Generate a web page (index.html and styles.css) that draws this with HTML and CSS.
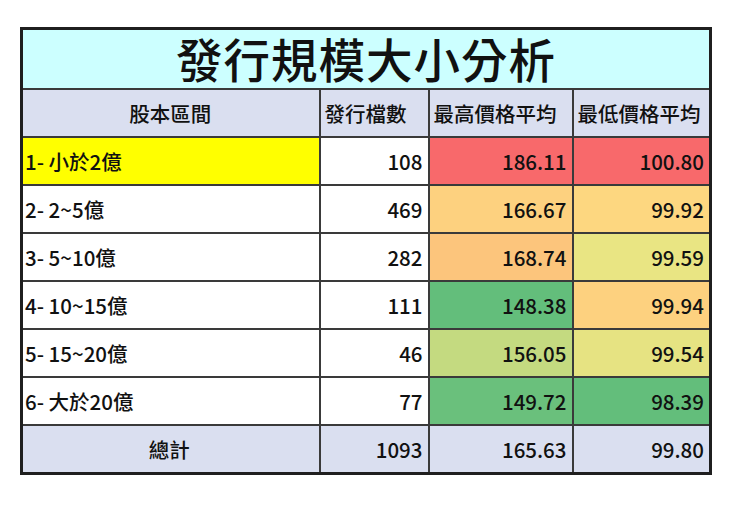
FILE: index.html
```html
<!DOCTYPE html>
<html lang="zh-Hant">
<head>
<meta charset="utf-8">
<link rel="stylesheet" href="styles.css">
</head>
<body>
<table class="sheet">
  <colgroup>
    <col class="c1"><col class="c2"><col class="c3"><col class="c4">
  </colgroup>
  <tr class="title-row"><td colspan="4" class="title">發行規模大小分析</td></tr>
  <tr class="head">
    <td class="center">股本區間</td>
    <td>發行檔數</td>
    <td>最高價格平均</td>
    <td>最低價格平均</td>
  </tr>
  <tr>
    <td class="label yellow">1- 小於2億</td>
    <td class="num">108</td>
    <td class="num red">186.11</td>
    <td class="num red">100.80</td>
  </tr>
  <tr>
    <td class="label">2- 2~5億</td>
    <td class="num">469</td>
    <td class="num orange1">166.67</td>
    <td class="num orange2">99.92</td>
  </tr>
  <tr>
    <td class="label">3- 5~10億</td>
    <td class="num">282</td>
    <td class="num orange3">168.74</td>
    <td class="num ylw1">99.59</td>
  </tr>
  <tr>
    <td class="label">4- 10~15億</td>
    <td class="num">111</td>
    <td class="num green">148.38</td>
    <td class="num orange1">99.94</td>
  </tr>
  <tr>
    <td class="label">5- 15~20億</td>
    <td class="num">46</td>
    <td class="num lime">156.05</td>
    <td class="num ylw2">99.54</td>
  </tr>
  <tr>
    <td class="label">6- 大於20億</td>
    <td class="num">77</td>
    <td class="num green2">149.72</td>
    <td class="num green">98.39</td>
  </tr>
  <tr class="total">
    <td class="center">總計</td>
    <td class="num">1093</td>
    <td class="num">165.63</td>
    <td class="num">99.80</td>
  </tr>
</table>
</body>
</html>
```

FILE: styles.css
```css
html, body {
  margin: 0;
  padding: 0;
  background: #ffffff;
}
body {
  padding: 27px 0 0 20px;
  font-family: "Noto Sans CJK TC", "Noto Sans", sans-serif;
  color: #111;
}
.sheet {
  border-collapse: collapse;
  border: 3px solid #1f1f1f;
  table-layout: fixed;
  width: 691px;
}
.c1 { width: 298px; }
.c2 { width: 109px; }
.c3 { width: 144px; }
.c4 { width: 138px; }
.sheet td {
  border: 2px solid #3a3a3a;
  height: 46px;
  padding: 0 5px 0 2px;
  font-size: 20.5px;
  font-weight: 500;
  line-height: 1;
  white-space: nowrap;
  vertical-align: middle;
}
.sheet .title {
  height: 56px;
  background: #ccffff;
  text-align: center;
  font-size: 46.5px;
  font-weight: 500;
  letter-spacing: 1px;
  padding: 0 0 2px 0;
}
.head td, .total td {
  background: #dadff0;
}
.head td { text-align: left; padding-left: 4px; }
.head td.center, .total td.center { text-align: center; }
.num { text-align: right; }
.label { text-align: left; }
.yellow { background: #ffff00; }
.red { background: #f8696b; }
.orange1 { background: #fdd17f; }
.orange2 { background: #fdd780; }
.orange3 { background: #fcc57c; }
.ylw1 { background: #e9e583; }
.ylw2 { background: #e6e382; }
.green { background: #63be7b; }
.green2 { background: #6ac07c; }
.lime { background: #c4da80; }
```
